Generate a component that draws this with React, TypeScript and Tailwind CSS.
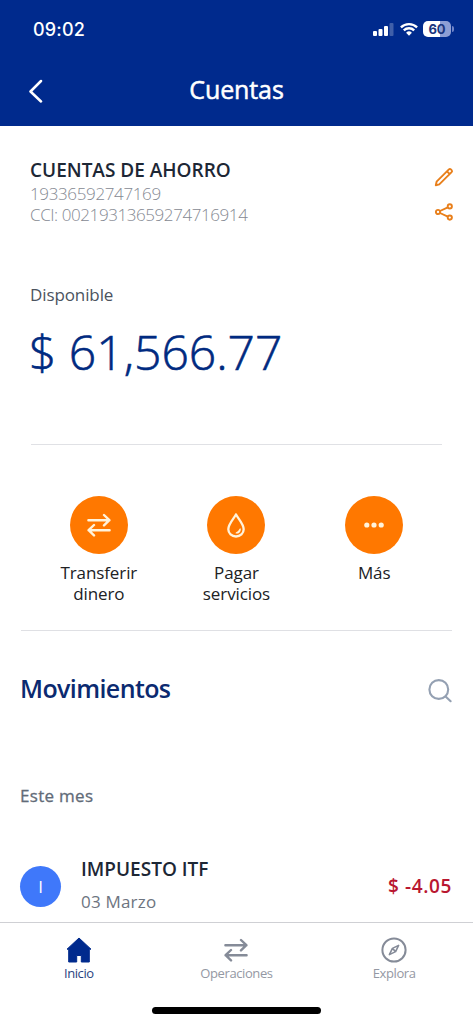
import type { ReactNode } from 'react'

type Action = { id: string; lines: string[]; icon: ReactNode }
type Movement = { id: string; initial: string; title: string; date: string; amount: string }

function TransferIcon({ className }: { className?: string }) {
  return (
    <svg
      viewBox="0 0 24 24"
      className={className}
      fill="none"
      stroke="currentColor"
      strokeWidth="2.4"
      strokeLinecap="round"
      strokeLinejoin="round"
    >
      <path d="M1.4 7.2h21M17 2l5.4 5.2-5.4 5.2M22.6 17.2h-21M7 12l-5.4 5.2L7 22.4" />
    </svg>
  )
}

function DropIcon() {
  return (
    <svg viewBox="0 0 20 26" className="h-[26px] w-5" fill="none" stroke="currentColor" strokeLinecap="round" strokeLinejoin="round">
      <path strokeWidth="2.3" d="M10 2.4C8.4 6 2.3 12 2.3 17.3a7.7 7.2 0 0 0 15.4 0C17.7 12 11.6 6 10 2.4Z" />
      <path fill="currentColor" strokeWidth="1.2" d="M14.2 17c.1 2.6-1.4 4-4 4 1.7-.8 3-2 4-4Z" />
    </svg>
  )
}

function DotsIcon() {
  return (
    <svg viewBox="0 0 20 6" className="h-1.5 w-5" fill="currentColor">
      <circle cx="2.8" cy="3" r="2.6" />
      <circle cx="10" cy="3" r="2.6" />
      <circle cx="17.2" cy="3" r="2.6" />
    </svg>
  )
}

function StatusBar() {
  return (
    <div className="flex h-[58px] items-center justify-between pl-[33px] pr-[19px] font-['Inter',sans-serif]">
      <span className="text-[18px] font-medium tracking-[0.2px]">09:02</span>
      <div className="flex items-center gap-[5.5px]">
        <svg viewBox="0 0 21 13" className="h-[13px] w-[21px]" fill="currentColor">
          <rect x="0" y="8" width="4" height="5" rx="1" />
          <rect x="5.5" y="6" width="4" height="7" rx="1" />
          <rect x="11" y="3" width="4" height="10" rx="1" />
          <rect x="16.5" y="0" width="4" height="13" rx="1" opacity=".25" />
        </svg>
        <svg viewBox="0 0 18 14" className="h-3.5 w-[18px]" fill="none" stroke="currentColor" strokeWidth="2.3">
          <path d="M.9 5.4a11.5 11.5 0 0 1 16.2 0" />
          <path d="M3.8 8.4a7.4 7.4 0 0 1 10.4 0" />
          <path fill="currentColor" stroke="none" d="M9 13.7 6.1 10.8a4.1 4.1 0 0 1 5.8 0Z" />
        </svg>
        <div className="flex items-center">
          <div className="flex h-4 w-7 items-center justify-center rounded-[5px] bg-linear-to-r from-white from-60% to-[#8d9ed5] to-60% text-[13px] leading-none font-bold text-[#1b357e]">
            60
          </div>
          <div className="ml-px h-1.5 w-[2px] rounded-r-full bg-[#6f84c8]" />
        </div>
      </div>
    </div>
  )
}

const actions: Action[] = [
  { id: 'transfer', lines: ['Transferir', 'dinero'], icon: <TransferIcon className="size-6" /> },
  { id: 'pay', lines: ['Pagar', 'servicios'], icon: <DropIcon /> },
  { id: 'more', lines: ['Más'], icon: <DotsIcon /> },
]

const movements: Movement[] = [
  { id: 'itf', initial: 'I', title: 'IMPUESTO ITF', date: '03 Marzo', amount: '$ -4.05' },
]

export default function App() {
  return (
    <div className="flex h-[1024px] w-[473px] flex-col overflow-hidden bg-white font-['Open_Sans','Noto_Sans',sans-serif]">
      <header className="h-[126px] shrink-0 bg-[#002a8d] text-white">
        <StatusBar />
        <div className="grid h-[62px] grid-cols-3 items-center">
          <button className="pl-7" aria-label="Volver">
            <svg viewBox="0 0 15 24" className="mt-1 h-6 w-[15px]" fill="none" stroke="currentColor" strokeWidth="2.5" strokeLinecap="round" strokeLinejoin="round">
              <path d="M13 2 2.5 12.5 13 22.5" />
            </svg>
          </button>
          <h1 className="text-center text-[25px] leading-8 tracking-[-0.1px] [-webkit-text-stroke:0.5px]">Cuentas</h1>
        </div>
      </header>

      <main className="min-h-0 flex-1 overflow-hidden">
        <section className="mx-[31px] flex h-[319px] flex-col border-b border-[#e0e1e5] whitespace-nowrap">
          <div className="flex justify-between pt-8">
            <div className="-ml-px">
              <h2 className="text-[19px] leading-6 font-semibold text-[#1d2735]">CUENTAS DE AHORRO</h2>
              <p className="mt-px text-[17px] leading-[21px] font-light tracking-[-0.36px] text-[#858992]">19336592747169</p>
              <p className="text-[17px] leading-[21px] font-light tracking-[-0.42px] text-[#858992]">CCI: 00219313659274716914</p>
            </div>
            <div className="-mr-[13px] flex flex-col items-center gap-3.5 pt-2 text-[#e87f1b]">
              <svg viewBox="0 0 22 22" className="size-[22px]" fill="none" stroke="currentColor" strokeWidth="1.9" strokeLinejoin="round">
                <path d="m2.8 19.2.8-3.5L15.9 3.4q1-1 2 0l.7.7q1 1 0 2L6.3 18.4ZM14 5.3l2.7 2.7" />
              </svg>
              <svg viewBox="0 0 20 20" className="size-5" fill="none" stroke="currentColor" strokeWidth="1.9">
                <circle cx="4" cy="10" r="2.1" />
                <circle cx="15.8" cy="4.4" r="2.1" />
                <circle cx="15.8" cy="15.6" r="2.1" />
                <path d="m6 9 7.8-3.7M6 11l7.8 3.7" />
              </svg>
            </div>
          </div>
          <p className="-ml-px mt-[58px] text-[17px] leading-6 tracking-[-0.1px] text-[#4b535e]">Disponible</p>
          <p className="-ml-[2px] mt-[14px] text-[48px] leading-[62px] font-light text-[#002a80] [-webkit-text-stroke:0.6px]">
            $ 61,566.77
          </p>
        </section>

        <section className="mx-[21px] h-[186px] border-b border-[#dfe0e4] px-[9px] pt-[51px]">
          <div className="grid grid-cols-3">
            {actions.map((action) => (
              <button key={action.id} className="flex flex-col items-center">
                <span className="flex size-[58px] items-center justify-center rounded-full bg-[#ff7800] text-[#fff3dc]">
                  {action.icon}
                </span>
                <span className="mt-2 text-[17px] leading-[21px] tracking-[-0.1px] text-[#202124]">
                  {action.lines.map((line) => (
                    <span key={line} className="block">{line}</span>
                  ))}
                </span>
              </button>
            ))}
          </div>
        </section>

        <section className="px-[21px] pt-[42px]">
          <div className="flex h-8 items-center justify-between">
            <h2 className="-ml-px text-[25px] font-semibold tracking-[-0.6px] text-[#0b2a70]">Movimientos</h2>
            <svg viewBox="0 0 24 24" className="mt-1 size-6" fill="none" stroke="#94a0b2" strokeWidth="2.1" strokeLinecap="round">
              <circle cx="10.8" cy="10.5" r="9.4" />
              <path d="m17.6 17.4 5 4.8" />
            </svg>
          </div>
          <h3 className="-ml-px mt-[79px] text-[17px] leading-6 tracking-[0.3px] text-[#626b78] [-webkit-text-stroke:0.3px]">
            Este mes
          </h3>
          {movements.map((item) => (
            <div key={item.id} className="mt-[47px] flex items-center">
              <span className="mt-1 -ml-px flex size-[41px] items-center justify-center rounded-full bg-[#3f78fa] text-[17px] text-white">
                {item.initial}
              </span>
              <div className="ml-5 flex-1">
                <p className="text-[19px] leading-7 font-semibold text-[#1d2735]">{item.title}</p>
                <p className="mt-[7px] text-[17px] leading-6 tracking-[0.2px] text-[#6d7480]">{item.date}</p>
              </div>
              <span className="mt-1 text-[19px] font-semibold tracking-[0.6px] text-[#b91731]">{item.amount}</span>
            </div>
          ))}
        </section>
      </main>

      <footer className="h-[102px] shrink-0 border-t border-[#cfd0d4] bg-white">
        <nav className="grid h-[84px] grid-cols-3 pt-[13px] text-[13px] leading-5 tracking-[-0.4px] text-[#9498a3]">
          <a className="flex flex-col items-center text-[#29437f]">
            <svg viewBox="0 0 28 28" className="size-7" fill="#002a8d" stroke="#002a8d" strokeWidth="1" strokeLinejoin="round">
              <path d="M14 2 2 13.2h1.7V26h8v-6.5h4.6V26h8V13.2H26Z" />
            </svg>
            <span className="-mt-px">Inicio</span>
          </a>
          <a className="flex flex-col items-center">
            <span className="flex size-7 items-center justify-center">
              <TransferIcon className="size-6 text-[#858b98]" />
            </span>
            <span className="-mt-px">Operaciones</span>
          </a>
          <a className="flex flex-col items-center">
            <svg viewBox="0 0 28 28" className="size-7" fill="none" stroke="#858b98" strokeWidth="2" strokeLinejoin="round">
              <circle cx="14" cy="14" r="11.6" />
              <path strokeWidth="1.6" d="m18.6 9.4-3 6.2-6.2 3 3-6.2ZM12.6 12.6l2.8 2.8" />
            </svg>
            <span className="-mt-px">Explora</span>
          </a>
        </nav>
        <div className="mx-auto h-[7px] w-[169px] rounded-full bg-black" />
      </footer>
    </div>
  )
}
